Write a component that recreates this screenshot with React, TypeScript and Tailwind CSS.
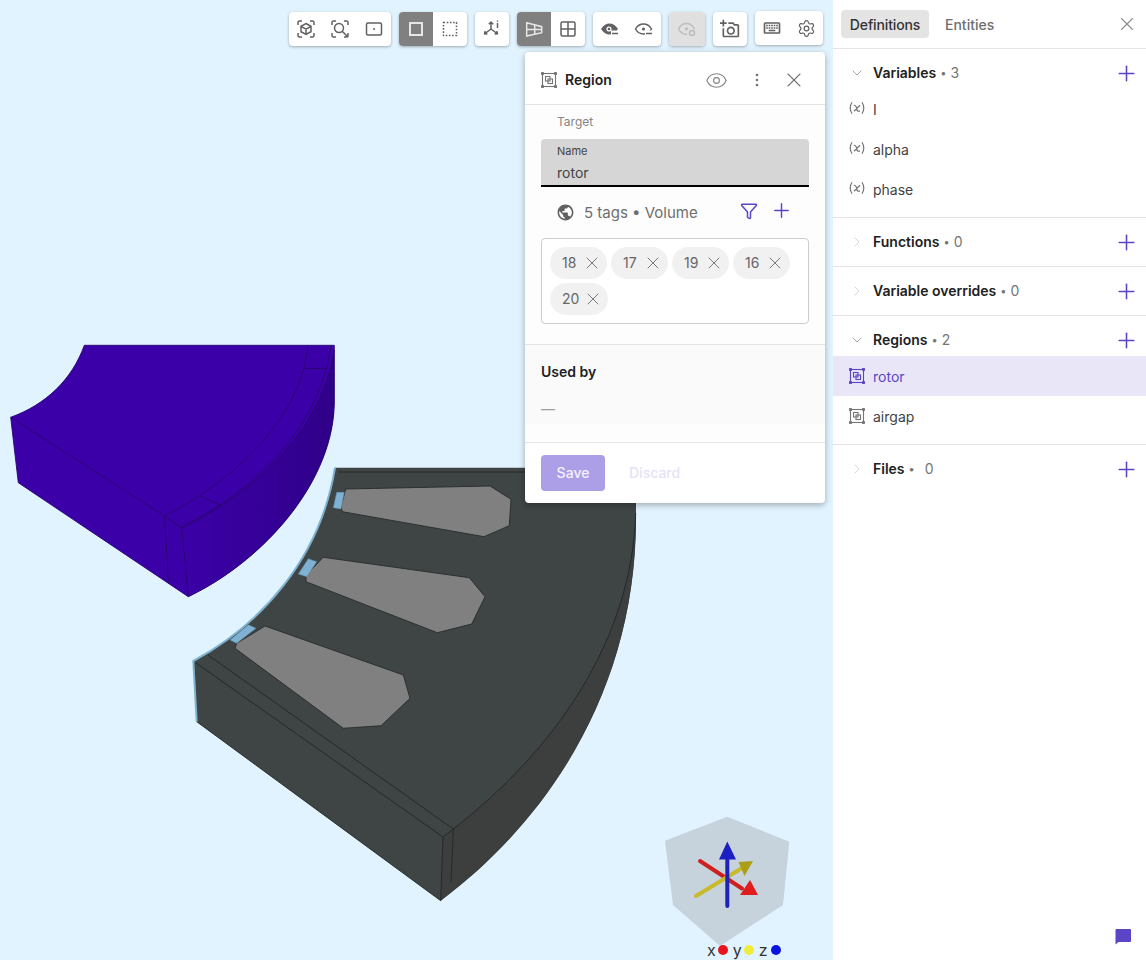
import React from "react";
import { ChevronDown, ChevronRight, Funnel, Plus, Settings, X, Eye } from "lucide-react";
import { MdPublic, MdOutlineAddAPhoto, MdOutlineKeyboard } from "react-icons/md";

const G = "#616161";

function Svg({ children, size = 20 }: { children: React.ReactNode; size?: number }) {
  return (
    <svg width={size} height={size} viewBox="0 0 20 20" fill="none" stroke={G} strokeWidth={1.5}>
      {children}
    </svg>
  );
}

const Brackets = () => (
  <path d="M2 6V3.500A1.500 1.500 0 0 1 3.500 2H6M14 2h2.500A1.500 1.500 0 0 1 18 3.500V6M18 14v2.500a1.500 1.500 0 0 1-1.500 1.500H14M6 18H3.500A1.500 1.500 0 0 1 2 16.500V14" />
);

const icons: Record<string, React.ReactNode> = {
  fitCube: (
    <Svg>
      <Brackets />
      <path d="M10 4.500l5 2.800v5.400l-5 2.800-5-2.800V7.300zM5 7.300l5 2.900 5-2.900M10 10.200V15.500" />
    </Svg>
  ),
  zoomFit: (
    <Svg>
      <Brackets />
      <circle cx="9" cy="9" r="4.500" />
      <path d="M12.500 12.500l5.500 5.500" />
    </Svg>
  ),
  frame: (
    <Svg>
      <rect x="2.500" y="4" width="15" height="12" rx="1.500" />
      <circle cx="10" cy="10" r="1" fill={G} stroke="none" />
    </Svg>
  ),
  solid: (
    <svg width="20" height="20" viewBox="0 0 20 20" fill="none" stroke="#e6e6e6" strokeWidth="2">
      <rect x="4" y="4" width="12" height="12" />
    </svg>
  ),
  dotted: (
    <Svg>
      <rect x="3.500" y="3.500" width="13" height="13" strokeDasharray="1.600 1.600" />
    </Svg>
  ),
  axes: (
    <Svg>
      <path d="M9 10V3M6.800 5.200L9 3l2.200 2.200M9 10l-6 4.500M9 10l6 4.500M3.200 12l-.6 2.800 2.800.2M14.800 12l.6 2.800-2.800.2" />
      <path d="M15.500 4v5M15.500 1.500v1.200" strokeWidth="1.500" />
    </Svg>
  ),
  perspective: (
    <svg width="20" height="20" viewBox="0 0 20 20" fill="none" stroke="#e6e6e6" strokeWidth="1.500">
      <path d="M2.700 3.700L17.700 7.700V13.700L2.700 17ZM10.700 5.600V15.300M2.700 10.500H17.700" />
    </svg>
  ),
  grid: (
    <Svg>
      <rect x="3" y="3" width="14" height="14" rx="1.500" />
      <path d="M10 3v14M3 10h14" />
    </Svg>
  ),
  eyeFill: (
    <svg width="20" height="20" viewBox="0 0 20 20">
      <path d="M1 10C3.500 6 6.500 4.500 9.500 4.500S15.500 6 18 10C15.500 14 12.500 15.500 9.500 15.500S3.500 14 1 10Z" fill={G} />
      <rect x="11" y="11.500" width="9" height="6" fill="#fff" />
      <circle cx="9" cy="10" r="2.600" fill="#fff" />
      <circle cx="9" cy="10" r="1.300" fill={G} />
      <path d="M12 14.500h6" stroke={G} strokeWidth="1.500" />
    </svg>
  ),
  eyeLine: (
    <svg width="20" height="20" viewBox="0 0 20 20" fill="none" stroke={G} strokeWidth="1.500">
      <path d="M1.500 10C3.500 6.500 6.500 5 9.500 5S15.500 6.500 17.500 10C15.500 13.500 12.500 15 9.500 15S3.500 13.500 1.500 10Z" />
      <rect x="11" y="11.500" width="9" height="6" fill="#fff" stroke="none" />
      <circle cx="9.500" cy="10" r="1.600" fill={G} stroke="none" />
      <path d="M12 14.500h6" />
    </svg>
  ),
  eyeOff: (
    <svg width="20" height="20" viewBox="0 0 20 20" fill="none" stroke="#bdbdbd" strokeWidth="1.500">
      <path d="M1.500 10c2-3.800 5-5.500 8-5.500s6 1.700 8 5.500M10 15.500c-3.300 0-6.500-1.700-8.500-5.500" />
      <circle cx="9.500" cy="9.800" r="1.600" fill="#bdbdbd" stroke="none" />
      <circle cx="15" cy="14" r="2.500" />
    </svg>
  ),
};

function RegionIcon({ color = "#757575" }: { color?: string }) {
  return (
    <svg width="16" height="16" viewBox="0 0 16 16" fill="none" stroke={color} strokeWidth="1.100">
      <rect x="1.500" y="1.500" width="13" height="13" />
      <rect x="4.500" y="4.500" width="4.500" height="4.500" />
      <rect x="7" y="7" width="4.500" height="4.500" />
      <g fill={color} stroke="none">
        <rect x="0" y="0" width="3" height="3" rx="0.800" />
        <rect x="13" y="0" width="3" height="3" rx="0.800" />
        <rect x="0" y="13" width="3" height="3" rx="0.800" />
        <rect x="13" y="13" width="3" height="3" rx="0.800" />
      </g>
    </svg>
  );
}

function VarIcon() {
  return (
    <svg width="16" height="16" viewBox="0 0 16 16" fill="none" stroke="#757575" strokeWidth="1.200" className="-mt-[2px]">
      <path d="M3 2.300C0.800 5.800 0.800 10.200 3 13.700M13 2.300C15.200 5.800 15.200 10.200 13 13.700" />
      <path d="M4.800 5.300C6.300 5 7 5.500 7.400 7.300L8 10.300C8.400 11.400 9.300 11.400 11 10.900M11 5.300L5 11.200" />
    </svg>
  );
}

function Btn({ name, active, children }: { name?: string; active?: boolean; children?: React.ReactNode }) {
  return (
    <div className={`w-[34px] h-[34px] flex items-center justify-center ${active ? "bg-[#808080]" : ""}`}>
      {name ? icons[name] : children}
    </div>
  );
}

function Group({ children, className = "" }: { children: React.ReactNode; className?: string }) {
  return (
    <div className={`flex rounded overflow-hidden bg-white shadow-[0_1px_3px_rgba(0,0,0,0.3)] ${className}`}>{children}</div>
  );
}

function Chip({ label }: { label: string }) {
  return (
    <div className="h-8 flex items-center pl-3 pr-[5px] gap-[4px] rounded-full bg-[#f1f1f1] text-sm text-[#666666]">
      <span className={label === "20" ? "w-[17px]" : "w-4"}>{label}</span>
      <X size={20} strokeWidth={1.200} color="#7a7a7a" />
    </div>
  );
}

function Section({
  title,
  count,
  open,
  last,
  children,
}: {
  title: string;
  count: string;
  open?: boolean;
  last?: boolean;
  children?: React.ReactNode;
}) {
  return (
    <div className={`pt-2 pb-2 ${last ? "" : "border-b border-[#e4e4e4]"}`}>
      <div className="h-8 flex items-center pl-4 pr-[7px]">
        {open ? (
          <ChevronDown size={16} color="#9a9a9a" strokeWidth={1.300} />
        ) : (
          <ChevronRight size={16} color="#d0d0d0" strokeWidth={1.300} />
        )}
        <span className="ml-2 text-sm font-semibold text-[#212121]">{title}</span>
        <span className="ml-[4px] text-[11px] text-[#757575]">•</span>
        <span className={`text-sm text-[#757575] ${last ? "ml-[10px]" : "ml-[4px]"}`}>{count}</span>
        <Plus size={25} strokeWidth={1.500} color="#5b45c6" className="ml-auto" />
      </div>
      {children}
    </div>
  );
}

function Row({ icon, label, active }: { icon: React.ReactNode; label: string; active?: boolean }) {
  return (
    <div className={`h-10 flex items-center pl-4 gap-2 text-sm ${active ? "bg-[#e9e6f7] text-[#5b45c6]" : "text-[#424242]"}`}>
      <span className="w-4 h-4 flex items-center justify-center">{icon}</span>
      <span className="pt-[2px]">{label}</span>
    </div>
  );
}

function Scene() {
  return (
    <svg width="833" height="960" viewBox="0 0 833 960" className="absolute left-0 top-0">
      <defs>
        <linearGradient id="pside" x1="0" y1="0" x2="1" y2="0">
          <stop offset="0" stopColor="#3c00a8" />
          <stop offset="1" stopColor="#2f0088" />
        </linearGradient>
      </defs>
      <path
        d="M84.300 345.300H334.300V400C335 480 265 560 188.300 596.700L18.300 482.700L10.700 417.300C45 405 72 380 84.300 345.300Z"
        fill="#3c00a8"
      />
      <path d="M334.300 350V400C335 480 265 560 188.300 596.700L181.700 528C240 500 320 440 334.300 350Z" fill="url(#pside)" />
      <g fill="none" stroke="#28066e" strokeWidth="0.900">
        <path d="M84.300 345.300H334.300V400C335 480 265 560 188.300 596.700L18.300 482.700L10.700 417.300C45 405 72 380 84.300 345.300Z" />
        <path d="M10.700 417.300L164.500 516L181.700 528C240 500 320 440 334.300 350" />
        <path d="M183 526C240 498 318 438 331 345.300" />
        <path d="M164.500 516C225 485 300 425 308 345.300" />
        <path d="M200.500 496L220 505M305 368.500L327 368.500" />
        <path d="M164.500 516L168.500 583M181.700 528L188.300 596.700" />
      </g>

      <path
        d="M335 467.700H636V513C638 680 555 815 440.700 900.700L196.700 721.700L193.300 661C260 625 320 560 335 467.700Z"
        fill="#3f4444"
      />
      <path d="M453.300 829C555 750 632 640 635.700 513C638 680 555 815 440.700 900.700L443 837Z" fill="#3d3f3f" />
      <g fill="none" stroke="#222626" strokeWidth="0.900">
        <path d="M338 472H636" />
        <path d="M196 663L443 837L453.300 829L208 655" />
        <path d="M453.300 829C555 750 632 640 635.700 513" />
        <path d="M443 837L440.700 900.700M453.300 829L451 882" />
        <path d="M196.700 721.700L440.700 900.700" />
      </g>
      <path d="M335 467.700C320 560 260 625 193.300 661L196.700 721.700" fill="none" stroke="#7fb2cf" strokeWidth="2" />
      <g fill="#808080" stroke="#262a2a" strokeWidth="0.900">
        <path d="M345.700 489L490 486L511 499.300L509.300 525.700L484 536.700L342.300 511.700L341 506.700Z" />
        <path d="M323.300 557.300L469.300 577.700L485 596.700L471.700 624L437.300 632.700L306 581.700L306 575Z" />
        <path d="M265 626L403.300 675L410 698.300L381 725.700L343.300 728.300L235 648.300L236.700 643.300Z" />
      </g>
      <g fill="#7fb2d2" stroke="#5d8ba8" strokeWidth="0.500">
        <path d="M336.700 492.300L344.300 492.300L341 509L333.300 507.700Z" />
        <path d="M308.300 558.700L316.700 561.700L306.700 576.700L298.300 574Z" />
        <path d="M248.300 624.700L256 628.300L236.700 643.300L230 640Z" />
      </g>

      <path d="M727.300 816.700L789.300 841.700L783 905L720 946L673 905L665 840.700Z" fill="#c6d3dc" />
      <path d="M700 861L742 888.500" stroke="#cf2020" strokeWidth="4" strokeLinecap="round" />
      <path d="M758 895L740 895L750 880Z" fill="#e01c1c" />
      <path d="M696 896L742 868" stroke="#c9b92c" strokeWidth="4" strokeLinecap="round" />
      <path d="M753 861L738.500 862L744.500 876Z" fill="#ac9e18" />
      <path d="M727.300 906V855" stroke="#1e22b8" strokeWidth="4" strokeLinecap="round" />
      <path d="M727.300 841.500L719 859.500H736Z" fill="#1c20c4" />
    </svg>
  );
}

export default function App() {
  return (
    <div className="w-[1146px] h-[960px] flex overflow-hidden bg-white [font-family:Inter,sans-serif]">
      <div className="relative w-[833px] h-full bg-[#e1f3fe] overflow-hidden">
        <Scene />

        <div className="absolute left-[289px] top-3 flex gap-2 items-start">
          <Group>
            <Btn name="fitCube" />
            <Btn name="zoomFit" />
            <Btn name="frame" />
          </Group>
          <Group>
            <Btn name="solid" active />
            <Btn name="dotted" />
          </Group>
          <Group>
            <Btn name="axes" />
          </Group>
          <Group>
            <Btn name="perspective" active />
            <Btn name="grid" />
          </Group>
          <Group>
            <Btn name="eyeFill" />
            <Btn name="eyeLine" />
          </Group>
          <Group className="w-9">
            <div className="w-9 h-[34px] flex items-center justify-center bg-[#e0e0e0]">{icons.eyeOff}</div>
          </Group>
          <Group>
            <Btn>
              <MdOutlineAddAPhoto size={20} color={G} />
            </Btn>
          </Group>
          <Group className="-mt-px">
            <Btn>
              <MdOutlineKeyboard size={20} color={G} />
            </Btn>
            <Btn>
              <Settings size={19} color={G} strokeWidth={1.500} />
            </Btn>
          </Group>
        </div>

        <div className="absolute left-[525px] top-[52px] w-[300px] h-[451px] flex flex-col rounded bg-white shadow-[0_2px_6px_rgba(0,0,0,0.3)]">
          <div className="h-[53px] shrink-0 flex items-center pl-4 pr-[19px] pt-1 border-b border-[#e4e4e4]">
            <RegionIcon />
            <span className="ml-2 text-sm font-semibold text-[#212121]">Region</span>
            <Eye size={23} strokeWidth={1.200} color="#858585" className="ml-auto" />
            <svg width="4" height="14" viewBox="0 0 4 14" className="ml-[27px]" fill="#757575">
              <circle cx="2" cy="2" r="1.300" />
              <circle cx="2" cy="7" r="1.300" />
              <circle cx="2" cy="12" r="1.300" />
            </svg>
            <X size={24} strokeWidth={1.100} color="#757575" className="ml-[23px]" />
          </div>

          <div className="h-[239px] shrink-0 px-4 pt-[9px] bg-[#fdfdfd]">
            <div className="pl-4 text-xs leading-4 text-[#858585]">Target</div>
            <div className="mt-[9px] h-[48px] pl-4 pt-[6px] rounded-t bg-[#d6d6d6] border-b-2 border-black">
              <div className="text-[11px] leading-3 text-[#424242]">Name</div>
              <div className="mt-[6px] text-sm leading-5 text-[#424242]">rotor</div>
            </div>
            <div className="h-[51px] flex items-center pl-[15px] pr-4">
              <MdPublic size={19} color="#616161" />
              <span className="ml-[9px] pt-[2px] text-[15px] text-[#6e6e6e]">5 tags • Volume</span>
              <Funnel size={18} strokeWidth={2} color="#5b45c6" className="ml-auto -mt-[4px]" />
              <Plus size={23} strokeWidth={1.500} color="#5b45c6" className="ml-[12px] -mt-[4px]" />
            </div>
            <div className="h-[86px] flex flex-wrap content-start gap-1 p-2 border border-[#cccccc] rounded bg-white">
              <Chip label="18" />
              <Chip label="17" />
              <Chip label="19" />
              <Chip label="16" />
              <Chip label="20" />
            </div>
          </div>

          <div className="border-t border-[#e4e4e4] bg-[#fafafa] h-[80px] shrink-0 px-4 pt-[17px]">
            <div className="text-sm leading-5 font-semibold text-[#212121]">Used by</div>
            <div className="mt-[17px] text-sm leading-5 text-[#9e9e9e]">—</div>
          </div>
          <div className="h-[19px] shrink-0 bg-[#fdfdfd] border-b border-[#e4e4e4]" />
          <div className="flex-1 flex items-start pl-4 pt-3 gap-6">
            <div className="w-16 h-9 rounded flex items-center justify-center bg-[#ac9fe8] text-sm font-medium text-[#f4f2fc]">
              Save
            </div>
            <div className="h-9 flex items-center text-sm font-medium text-[#e6e2f8]">Discard</div>
          </div>
        </div>

        <div className="absolute left-[707px] top-[940px] flex items-center text-base leading-5 text-[#333333]">
          <span>x</span>
          <span className="ml-[2px] w-[10px] h-[10px] rounded-full bg-[#e8141c]" />
          <span className="ml-[5px]">y</span>
          <span className="ml-[2px] w-[10px] h-[10px] rounded-full bg-[#f0ec3c]" />
          <span className="ml-[5px]">z</span>
          <span className="ml-[3px] w-[10px] h-[10px] rounded-full bg-[#0a14e0]" />
        </div>
      </div>

      <div className="relative w-[313px] h-full bg-white flex flex-col">
        <div className="h-[49px] shrink-0 flex items-center pl-2 pr-2 border-b border-[#e4e4e4]">
          <div className="h-7 w-[88px] pt-[2px] flex items-center justify-center rounded bg-[#e4e4e4] text-sm font-medium tracking-[-0.01em] text-[#333333]">
            Definitions
          </div>
          <div className="ml-4 pt-[2px] text-sm font-medium text-[#6e6e6e]">Entities</div>
          <X size={22} strokeWidth={1.200} color="#8c8c8c" className="ml-auto" />
        </div>

        <Section title="Variables" count="3" open>
          <Row icon={<VarIcon />} label="I" />
          <Row icon={<VarIcon />} label="alpha" />
          <Row icon={<VarIcon />} label="phase" />
        </Section>
        <Section title="Functions" count="0" />
        <Section title="Variable overrides" count="0" />
        <Section title="Regions" count="2" open>
          <Row icon={<RegionIcon color="#5b45c6" />} label="rotor" active />
          <Row icon={<RegionIcon />} label="airgap" />
        </Section>
        <Section title="Files" count="0" last />

        <svg width="18" height="18" viewBox="0 0 18 18" className="absolute left-[281px] top-[927px]" fill="#5b45c6">
          <path d="M1.500 3A1 1 0 0 1 2.500 2H16A1 1 0 0 1 17 3V14A1 1 0 0 1 16 15H4.500L1.500 17.500Z" />
        </svg>
      </div>
    </div>
  );
}
